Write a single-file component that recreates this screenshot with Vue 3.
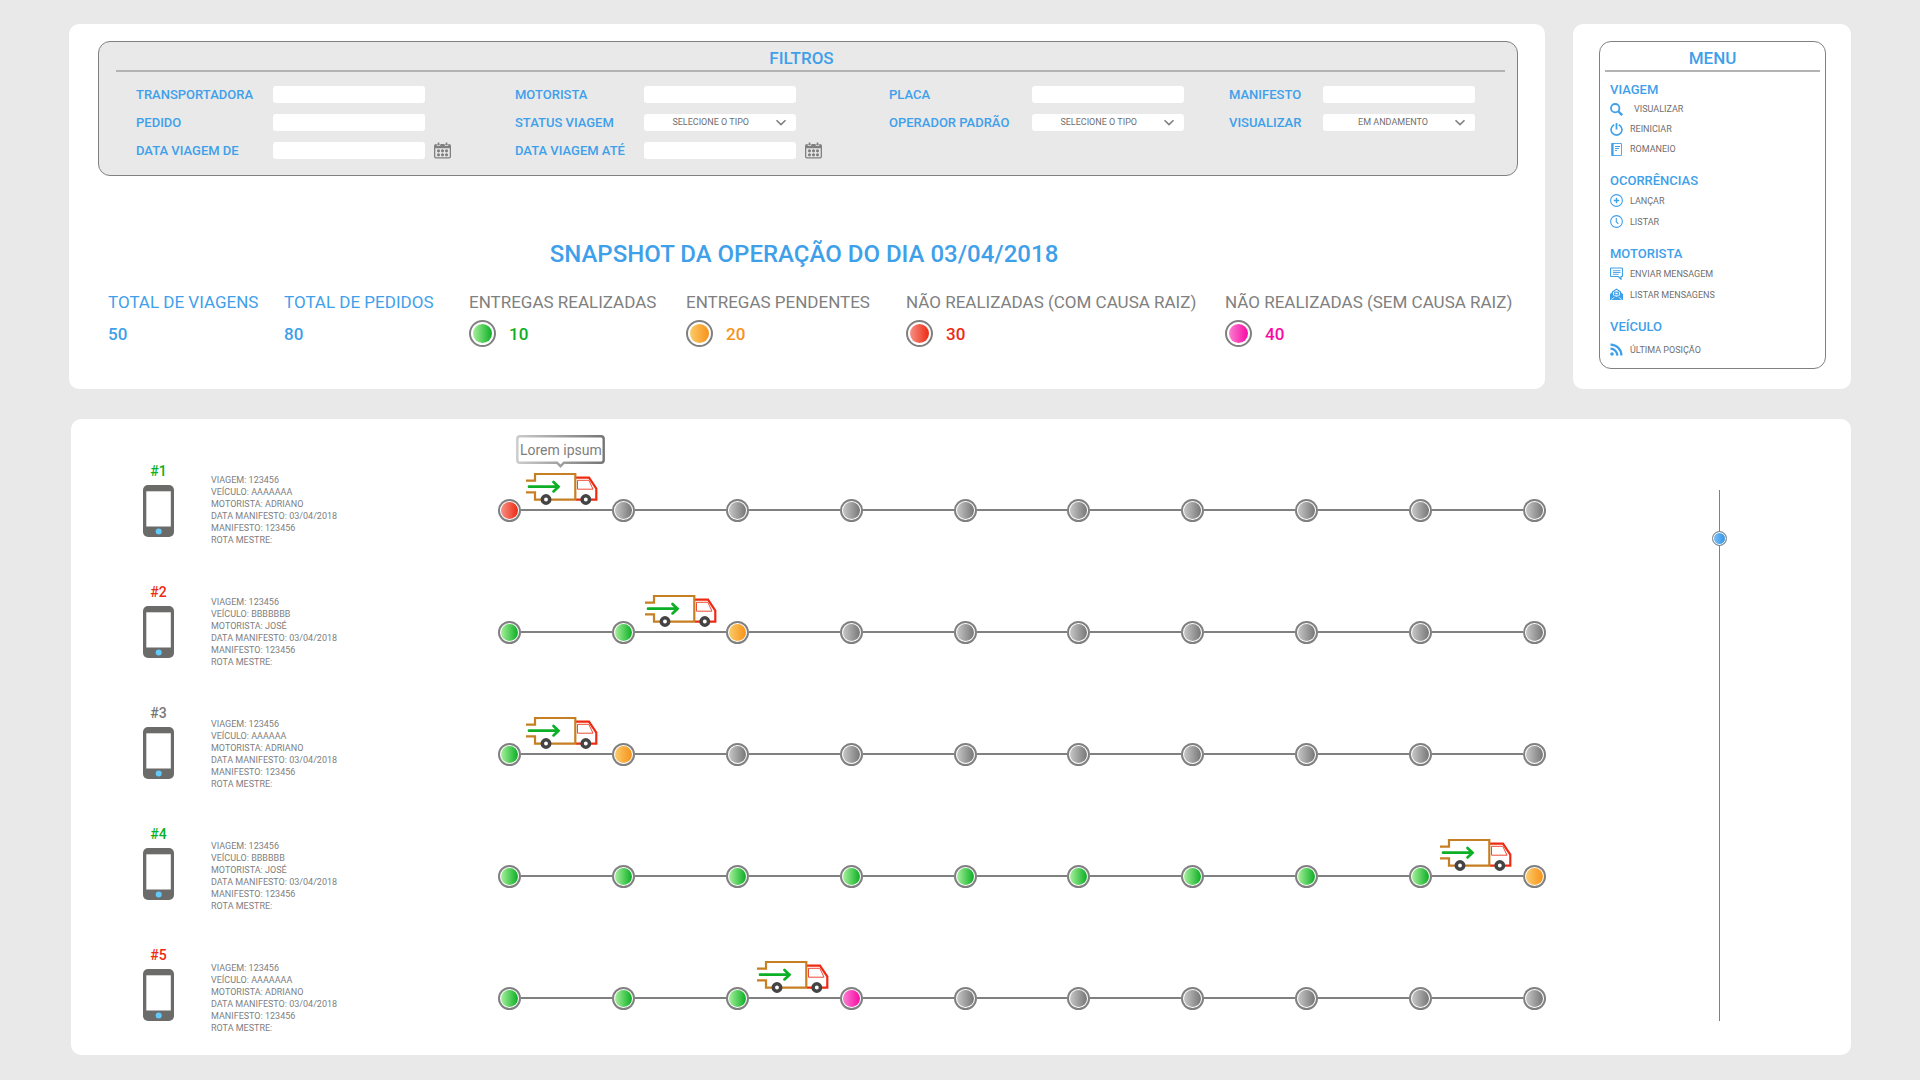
<script setup>
import { ref } from 'vue'

const filterColumns = [
  {
    key: 'a',
    fields: [
      { id: 'transportadora', label: 'TRANSPORTADORA', type: 'text' },
      { id: 'pedido', label: 'PEDIDO', type: 'text' },
      { id: 'data-de', label: 'DATA VIAGEM DE', type: 'date' },
    ],
  },
  {
    key: 'b',
    fields: [
      { id: 'motorista', label: 'MOTORISTA', type: 'text' },
      { id: 'status', label: 'STATUS VIAGEM', type: 'select', option: 'SELECIONE O TIPO' },
      { id: 'data-ate', label: 'DATA VIAGEM ATÉ', type: 'date' },
    ],
  },
  {
    key: 'c',
    fields: [
      { id: 'placa', label: 'PLACA', type: 'text' },
      { id: 'operador', label: 'OPERADOR PADRÃO', type: 'select', option: 'SELECIONE O TIPO' },
    ],
  },
  {
    key: 'd',
    fields: [
      { id: 'manifesto', label: 'MANIFESTO', type: 'text' },
      { id: 'visualizar', label: 'VISUALIZAR', type: 'select', option: 'EM ANDAMENTO' },
    ],
  },
]

const stats = [
  { label: 'TOTAL DE VIAGENS', value: 50 },
  { label: 'TOTAL DE PEDIDOS', value: 80 },
  { label: 'ENTREGAS REALIZADAS', value: 10, tone: 'green' },
  { label: 'ENTREGAS PENDENTES', value: 20, tone: 'orange' },
  { label: 'NÃO REALIZADAS (COM CAUSA RAIZ)', value: 30, tone: 'red' },
  { label: 'NÃO REALIZADAS (SEM CAUSA RAIZ)', value: 40, tone: 'pink' },
]

const menu = [
  {
    title: 'VIAGEM',
    density: 'tight',
    items: [
      { icon: 'search', label: 'VISUALIZAR' },
      { icon: 'power', label: 'REINICIAR' },
      { icon: 'book', label: 'ROMANEIO' },
    ],
  },
  {
    title: 'OCORRÊNCIAS',
    density: 'normal',
    items: [
      { icon: 'plus', label: 'LANÇAR' },
      { icon: 'clock', label: 'LISTAR' },
    ],
  },
  {
    title: 'MOTORISTA',
    density: 'normal',
    items: [
      { icon: 'message', label: 'ENVIAR MENSAGEM' },
      { icon: 'mail', label: 'LISTAR MENSAGENS' },
    ],
  },
  {
    title: 'VEÍCULO',
    density: 'loose',
    items: [{ icon: 'signal', label: 'ÚLTIMA POSIÇÃO' }],
  },
]

const stops = (...done) => [...done, ...Array(10 - done.length).fill('gray')]

// "progress" is the truck's position, counted in legs between stops
const trips = [
  { id: 1, tone: 'green', vehicle: 'AAAAAAA', driver: 'ADRIANO', progress: 0.46, note: 'Lorem ipsum', stops: stops('red') },
  { id: 2, tone: 'red', vehicle: 'BBBBBBB', driver: 'JOSÉ', progress: 1.5, stops: stops('green', 'green', 'orange') },
  { id: 3, tone: 'gray', vehicle: 'AAAAAA', driver: 'ADRIANO', progress: 0.46, stops: stops('green', 'orange') },
  { id: 4, tone: 'green', vehicle: 'BBBBBB', driver: 'JOSÉ', progress: 8.49, stops: stops(...Array(9).fill('green'), 'orange') },
  { id: 5, tone: 'red', vehicle: 'AAAAAAA', driver: 'ADRIANO', progress: 2.49, stops: stops('green', 'green', 'green', 'pink') },
]

const scroll = ref(8)
</script>

<template>
  <div class="page">
    <div class="top">
      <main class="card summary">
        <form class="filters" @submit.prevent>
          <h2 class="box-title filters-title">FILTROS</h2>
          <div class="filter-grid">
            <div v-for="col in filterColumns" :key="col.key" class="filter-col" :class="'col-' + col.key">
              <div v-for="f in col.fields" :key="f.id" class="field">
                <label :for="f.id">{{ f.label }}</label>
                <span v-if="f.type === 'select'" class="select-wrap">
                  <select :id="f.id" class="control"><option>{{ f.option }}</option></select>
                  <svg class="chevron" width="12" height="7" viewBox="0 0 12 7" aria-hidden="true">
                    <path d="M1.5 1.2 6 5.6l4.5-4.4" fill="none" stroke="#808080" stroke-width="1.6" />
                  </svg>
                </span>
                <input v-else :id="f.id" class="control" type="text" />
                <button v-if="f.type === 'date'" class="calendar" type="button" aria-label="Abrir calendário">
                  <svg width="17" height="17" viewBox="0 0 17 17" aria-hidden="true">
                    <path fill="#808080" fill-rule="evenodd" d="M2 2h1.500V.5h2V2h6V.5h2V2H15q2 0 2 2v10.500q0 2-2 2H2q-2 0-2-2V4q0-2 2-2zM1.300 6.300v8q0 1 1 1h12.400q1 0 1-1v-8z" />
                    <path fill="none" stroke="#eaeaea" d="M3 0v3.500h3V0M11 0v3.500h3V0" stroke-width=".7" />
                    <g fill="#808080">
                      <circle v-for="n in 6" :key="n" :cx="4.5 + ((n - 1) % 3) * 4" :cy="n > 3 ? 12.8 : 8.8" r="1.6" />
                    </g>
                  </svg>
                </button>
              </div>
            </div>
          </div>
        </form>

        <h1>SNAPSHOT DA OPERAÇÃO DO DIA 03/04/2018</h1>

        <dl class="stats">
          <div v-for="s in stats" :key="s.label" :class="s.tone || 'blue'">
            <dt>{{ s.label }}</dt>
            <dd><span v-if="s.tone" class="dot large"></span>{{ s.value }}</dd>
          </div>
        </dl>
      </main>

      <aside class="card menu-card">
        <nav class="menu" aria-labelledby="menu-title">
          <h2 id="menu-title" class="box-title">MENU</h2>
          <section v-for="group in menu" :key="group.title" :class="group.density">
            <h3>{{ group.title }}</h3>
            <ul>
              <li v-for="item in group.items" :key="item.label">
                <a href="#" :class="item.icon">
                  <svg width="13" height="13" viewBox="0 0 13 13" fill="none" stroke="#3fa0ea" aria-hidden="true">
                    <g v-if="item.icon === 'search'">
                      <circle cx="5.2" cy="5.2" r="4.2" stroke-width="1.8" />
                      <path d="m8.500 8.500 3.700 3.700" stroke-width="2.4" />
                    </g>
                    <g v-else-if="item.icon === 'power'" stroke-width="1.6">
                      <path d="M4.300 1.800a5.400 5.400 0 1 0 4.400 0" />
                      <path d="M6.500 0v6.500" stroke-width="1.8" />
                    </g>
                    <g v-else-if="item.icon === 'book'">
                      <path d="M2 .5h9.500v12H2z" stroke-width=".9" />
                      <path d="M2.500 0v13" stroke-width="2.2" />
                      <path d="M5 3.500h5M5 5.500h4M5 7.500h2" stroke-width="1" />
                    </g>
                    <g v-else-if="item.icon === 'plus'">
                      <circle cx="6.5" cy="6.5" r="5.9" stroke-width="1.1" />
                      <path d="M6.500 3.800v5.400M3.800 6.500h5.400" stroke-width="1.4" />
                    </g>
                    <g v-else-if="item.icon === 'clock'">
                      <circle cx="6.5" cy="6.5" r="5.9" stroke-width="1.1" />
                      <path d="M6.300 3v3.700l2 2.300" stroke-width="1.1" />
                    </g>
                    <g v-else-if="item.icon === 'message'">
                      <path d="M1.500 1h10q1 0 1 1v6.500q0 1-1 1H11v2.700L8.300 9.500H1.500q-1 0-1-1V2q0-1 1-1z" stroke-width="1.2" />
                      <path d="M3 3.700h7.500M3 5.500h7.500M3 7.300h5.500" stroke-width=".9" />
                    </g>
                    <g v-else-if="item.icon === 'mail'">
                      <path d="M0 6 2 4.500 6.500 8 11 4.500 13 6v6H0z" fill="#3fa0ea" stroke="none" />
                      <path d="M2.500 7.500V3.800L6.500 1.200l4 2.600v3.700L6.500 9.500z" fill="#fff" stroke-width="1.2" />
                      <rect x="4.7" y="4.2" width="3.6" height="2.6" stroke-width="1.2" />
                      <path d="m1 11.700 3.500-2.500M12 11.700 8.500 9.200" stroke="#fff" stroke-width=".7" />
                    </g>
                    <g v-else stroke-width="2.3">
                      <circle cx="2" cy="11" r="1.8" fill="#3fa0ea" stroke="none" />
                      <path d="M.5 5.700a6.700 6.700 0 0 1 6.700 6.900" />
                      <path d="M.5 1.600a10.800 10.800 0 0 1 10.900 11" />
                    </g>
                  </svg>
                  {{ item.label }}
                </a>
              </li>
            </ul>
          </section>
        </nav>
      </aside>
    </div>

    <section class="card board">
      <ul class="devices">
        <li v-for="t in trips" :key="t.id" :class="t.tone">
          <span class="number">#{{ t.id }}</span>
          <svg width="31" height="52" viewBox="0 0 31 52" aria-hidden="true">
            <rect width="31" height="52" rx="5" fill="#6b6b6a" />
            <path d="M3.300 6.300h24.500v35.200H3.300z" fill="#fff" />
            <circle cx="15.7" cy="46.5" r="3" fill="#63c8fa" />
          </svg>
        </li>
      </ul>

      <ul class="trips">
        <li v-for="t in trips" :key="t.id">
          <p class="info">
            VIAGEM: 123456<br />
            VEÍCULO: {{ t.vehicle }}<br />
            MOTORISTA: {{ t.driver }}<br />
            DATA MANIFESTO: 03/04/2018<br />
            MANIFESTO: 123456<br />
            ROTA MESTRE:
          </p>
          <div class="track">
            <template v-for="(stop, i) in t.stops" :key="i">
              <span v-if="i" class="leg"></span>
              <span class="dot" :class="stop"></span>
            </template>
            <div class="overlay">
              <div class="truck" :style="{ left: (t.progress / 9) * 100 + '%' }">
                <div v-if="t.note" class="tooltip">
                  <svg width="89" height="33" viewBox="0 0 89 33" aria-hidden="true">
                    <defs>
                      <linearGradient id="tip-edge" gradientUnits="userSpaceOnUse" x1="0" x2="89" y1="0" y2="0">
                        <stop offset="0" stop-color="#ccc" />
                        <stop offset="1" stop-color="#747474" />
                      </linearGradient>
                    </defs>
                    <path d="M4 1.300h81q2.700 0 2.700 2.700v21q0 2.700-2.700 2.700H48l-3.500 3.500-3.500-3.500H4q-2.700 0-2.700-2.700V4q0-2.700 2.700-2.700z" fill="#fff" stroke="url(#tip-edge)" stroke-width="2.4" />
                  </svg>
                  <span>{{ t.note }}</span>
                </div>
                <svg width="72" height="33" viewBox="0 0 72 33" fill="none" aria-hidden="true">
                  <path d="M50 5.700h13l7.300 11v11H50" stroke="#ee2a12" stroke-width="2.2" />
                  <path d="M51.500 8.300h11.300l4.200 8.900H51.500z" stroke="#ee4a35" />
                  <path d="M0 8.600h9V2h40.300v25.700H9v-7.400H0" stroke="#c67f23" stroke-width="2.2" />
                  <path d="M3 14.700h29.500M27.500 10l5 4.700-5 4.700" stroke="#0caf25" stroke-width="2.7" stroke-linecap="round" />
                  <g fill="#fff" stroke="#444" stroke-width="3.5">
                    <circle cx="20" cy="27.5" r="3.7" />
                    <circle cx="59.8" cy="27.5" r="3.7" />
                  </g>
                </svg>
              </div>
            </div>
          </div>
        </li>
      </ul>

      <input v-model="scroll" class="scroller" type="range" min="0" max="100" aria-label="Rolar viagens" />
    </section>
  </div>
</template>

<style>
body {
  background: #e9e9e9;
}
</style>

<style scoped>
.page {
  padding: 24px 69px 25px;
  font-family: Roboto, "Noto Sans", sans-serif;
  color: #808080;
}
h1, h2, h3, p, dl, dd, ul {
  margin: 0;
  padding: 0;
  font-weight: 500;
}
ul {
  list-style: none;
}
.card {
  background: #fff;
  border-radius: 10px;
}
.top {
  display: grid;
  grid-template-columns: minmax(0, 1fr) 278px;
  gap: 28px;
}
.summary {
  padding: 17px 27px 42px 29px;
}
.filters {
  background: #e9e9e9;
  border: 1px solid #808080;
  border-radius: 12px;
  padding: 0 12px 16px 17px;
}
.box-title {
  height: 26px;
  padding-top: 2px;
  border-bottom: 2px solid #b3b3b3;
  font-size: 17px;
  line-height: 28px;
  text-align: center;
  color: #3fa0ea;
}
.filters-title {
  padding-right: 18px;
}
.filter-grid {
  display: grid;
  grid-template-columns: 379fr 374fr 340fr 276fr;
  padding: 14px 0 0 20px;
}
.filter-col {
  display: flex;
  flex-direction: column;
  gap: 11px;
}
.field {
  display: flex;
  align-items: center;
  height: 17px;
}
.field label {
  font-size: 13px;
  font-weight: 500;
  color: #3fa0ea;
  white-space: nowrap;
}
.col-a label { width: 137px; }
.col-b label { width: 129px; }
.col-c label { width: 143px; }
.col-d label { width: 94px; }
.control {
  display: block;
  box-sizing: border-box;
  width: 152px;
  height: 17px;
  padding: 0 6px;
  border: 0;
  border-radius: 3px;
  background: #fff;
  font: 9px Roboto, sans-serif;
  color: #6f6f6f;
}
.select-wrap {
  position: relative;
}
select.control {
  appearance: none;
  padding: 0 47px 1px 0;
  text-align-last: right;
}
.chevron {
  position: absolute;
  right: 9px;
  top: 5px;
  pointer-events: none;
}
.calendar {
  display: flex;
  margin-left: 9px;
  padding: 0;
  border: 0;
  background: none;
}
h1 {
  margin-top: 63px;
  padding-right: 8px;
  font-size: 24px;
  line-height: 30px;
  text-align: center;
  color: #3fa0ea;
}
.stats {
  display: grid;
  grid-template-columns: 176fr 185fr 217fr 220fr 319fr 293fr;
  margin: 23px 0 0 10px;
}
.stats dt {
  font-size: 17px;
  font-weight: 400;
  line-height: 20px;
  white-space: nowrap;
}
.stats .blue dt {
  color: #3fa0ea;
}
.stats dd {
  display: flex;
  align-items: center;
  gap: 13px;
  height: 27px;
  margin-top: 8px;
  font-size: 17px;
  color: var(--tone);
}

.blue { --tone: #3fa0ea; }
.green { --soft: #a5f09a; --tone: #0caf25; }
.orange { --soft: #fbcb68; --tone: #f7921a; }
.red { --soft: #f59186; --tone: #ee2a12; }
.pink { --soft: #f97fd0; --tone: #fa0aa5; }
.gray { --soft: #c6c6c6; --tone: #777; }

.dot {
  flex: none;
  box-sizing: border-box;
  width: 23px;
  height: 23px;
  padding: 1px;
  border: 2px solid #808080;
  border-radius: 50%;
  background: linear-gradient(90deg, var(--soft), var(--tone)) content-box;
}
.dot.large {
  width: 27px;
  height: 27px;
  padding: 2px;
}

.menu-card {
  padding: 17px 25px 20px 26px;
}
.menu {
  box-sizing: border-box;
  height: 100%;
  border: 1px solid #808080;
  border-radius: 12px;
  padding: 0 5px;
}
.menu section {
  padding: 0 5px;
  margin-top: 13px;
}
.menu .box-title + section {
  margin-top: 9px;
}
.menu h3 {
  font-size: 13px;
  line-height: 18px;
  color: #3fa0ea;
}
.menu ul {
  font-weight: 400;
}
.menu a {
  display: flex;
  align-items: center;
  gap: 7px;
  height: 21px;
  font-size: 9px;
  color: #6f6f6f;
  text-decoration: none;
}
.menu a.search {
  gap: 11px;
}
.tight a { height: 20px; }
.loose a { height: 27px; }

.board {
  display: flex;
  margin: 30px 0 0 2px;
  padding: 43px 124px 21px 72px;
}
.devices {
  display: flex;
  flex-direction: column;
  gap: 46px;
  width: 31px;
}
.devices li {
  display: flex;
  flex-direction: column;
  align-items: center;
  gap: 5px;
}
.number {
  font-size: 14px;
  line-height: 18px;
  color: var(--tone);
}
.trips {
  flex: 1;
  display: flex;
  flex-direction: column;
  gap: 50px;
  margin: 12px 166px 0 37px;
}
.trips li {
  display: flex;
  align-items: center;
}
.info {
  width: 287px;
  font-size: 9px;
  font-weight: 400;
  line-height: 12px;
}
.track {
  position: relative;
  flex: 1;
  display: flex;
  align-items: center;
}
.leg {
  flex: 1;
  height: 2px;
  background: #808080;
}
.overlay {
  position: absolute;
  inset: 0 12px;
}
.truck {
  position: absolute;
  bottom: 17px;
  width: 72px;
  margin-left: -36px;
}
.truck svg {
  display: block;
}
.tooltip {
  position: absolute;
  left: -10px;
  bottom: 37px;
  width: 89px;
  height: 33px;
}
.tooltip span {
  position: absolute;
  inset: 0 0 4px;
  font-size: 14px;
  font-weight: 400;
  line-height: 30px;
  text-align: center;
}
.scroller {
  appearance: none;
  writing-mode: vertical-lr;
  width: 15px;
  margin: 28px 0 13px;
  background: linear-gradient(#808080, #808080) 7px 0 / 1px 100% no-repeat;
}
.scroller::-webkit-slider-thumb {
  appearance: none;
  box-sizing: border-box;
  width: 15px;
  height: 15px;
  border: 1px solid #808080;
  border-radius: 50%;
  background: linear-gradient(90deg, #7fc0f5, #2f93e8);
  box-shadow: inset 0 0 0 1px #fff;
}
</style>
